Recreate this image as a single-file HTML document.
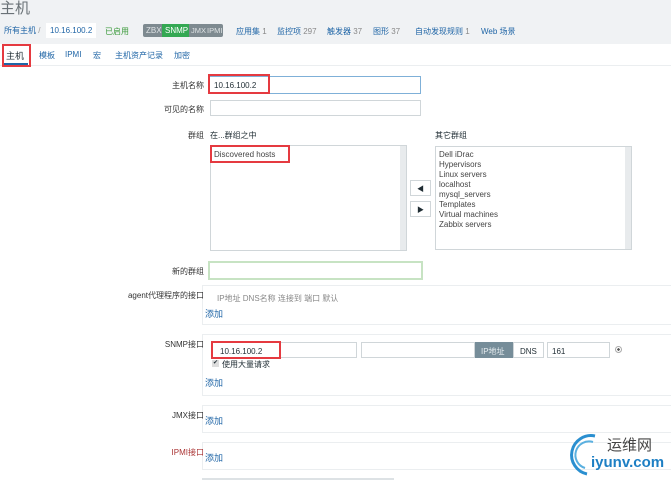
<!DOCTYPE html><html><head><meta charset="utf-8"><style>
*{margin:0;padding:0;box-sizing:border-box}
body{width:671px;height:480px;overflow:hidden;background:#fff;font-family:"Liberation Sans","Noto Sans CJK SC",sans-serif;font-size:8px;color:#1f2c33;position:relative}
.a{position:absolute;white-space:nowrap}
.b{color:#1f65a6}
.in{position:absolute;border:1px solid #d0d6d9;background:#fff}
.red{position:absolute;border:2px solid #e53a40}
.lbl{position:absolute;right:467px;white-space:nowrap;text-align:right;color:#333}
.box{position:absolute;left:202px;right:-5px;border:1px solid #ebeef0;border-right:none}
</style></head><body>
<div class="a" style="left:0;top:0;width:671px;height:44px;background:#f0f2f4"></div>
<div class="a" style="left:0;top:-3px;font-size:15px;color:#6a7277">主机</div>
<div class="a b" style="left:4px;top:25px">所有主机 <span style="color:#999">/</span></div>
<div class="in" style="left:46px;top:23px;width:50px;height:15px;border:none;padding:3px 0 0 4px;color:#1f65a6">10.16.100.2</div>
<div class="a" style="left:105px;top:26px;color:#3a9a3a">已启用</div>
<div class="a" style="left:143px;top:24px;width:80px;height:13px;background:#7e8a90;border-radius:2px"></div>
<div class="a" style="left:146px;top:26px;color:#dfe3e5">ZBX</div>
<div class="a" style="left:162px;top:24px;width:27px;height:13px;background:#34a853;color:#fff;padding:2px 0 0 3px">SNMP</div>
<div class="a" style="left:191px;top:26px;color:#dfe3e5;font-size:7.5px">JMX</div>
<div class="a" style="left:207px;top:26px;color:#dfe3e5;font-size:7.5px">IPMI</div>
<div class="a" style="left:236px;top:26px"><span class="b">应用集</span> <span style="color:#888">1</span></div>
<div class="a" style="left:277px;top:26px"><span class="b">监控项</span> <span style="color:#888">297</span></div>
<div class="a" style="left:327px;top:26px"><span class="b">触发器</span> <span style="color:#888">37</span></div>
<div class="a" style="left:373px;top:26px"><span class="b">图形</span> <span style="color:#888">37</span></div>
<div class="a" style="left:415px;top:26px"><span class="b">自动发现规则</span> <span style="color:#888">1</span></div>
<div class="a b" style="left:481px;top:26px">Web 场景</div>
<div class="a" style="left:0;top:65px;width:671px;height:1px;background:#ebeef0"></div>
<div class="a" style="left:6px;top:49px;font-size:9px">主机</div>
<div class="a" style="left:4px;top:63px;width:24px;height:2px;background:#1f65a6"></div>
<div class="red" style="left:2px;top:44px;width:29px;height:23px"></div>
<div class="a b" style="left:39px;top:50px">模板</div>
<div class="a b" style="left:65px;top:50px">IPMI</div>
<div class="a b" style="left:93px;top:50px">宏</div>
<div class="a b" style="left:115px;top:50px">主机资产记录</div>
<div class="a b" style="left:174px;top:50px">加密</div>

<div class="lbl" style="top:80px">主机名称</div>
<div class="in" style="left:208px;top:76px;width:213px;height:18px;border-color:#7fb0d8;padding:4px 0 0 5px">10.16.100.2</div>
<div class="red" style="left:208px;top:74px;width:62px;height:20px"></div>
<div class="lbl" style="top:104px">可见的名称</div>
<div class="in" style="left:210px;top:100px;width:211px;height:16px"></div>
<div class="lbl" style="top:130px">群组</div>
<div class="a" style="left:210px;top:130px">在...群组之中</div>
<div class="a" style="left:435px;top:130px">其它群组</div>
<div class="in" style="left:210px;top:145px;width:197px;height:106px"></div>
<div class="a" style="left:400px;top:146px;width:6px;height:104px;background:#e8ebed"></div>
<div class="a" style="left:214px;top:150px;color:#444">Discovered hosts</div>
<div class="red" style="left:210px;top:145px;width:80px;height:18px"></div>
<div class="in" style="left:410px;top:180px;width:21px;height:16px;text-align:center;font-size:7px;padding-top:3px">◀</div>
<div class="in" style="left:410px;top:201px;width:21px;height:16px;text-align:center;font-size:7px;padding-top:3px">▶</div>
<div class="in" style="left:435px;top:146px;width:197px;height:104px"></div>
<div class="a" style="left:625px;top:147px;width:6px;height:102px;background:#e8ebed"></div>
<div class="a" style="left:439px;top:150px;line-height:10px;color:#444">Dell iDrac<br>Hypervisors<br>Linux servers<br>localhost<br>mysql_servers<br>Templates<br>Virtual machines<br>Zabbix servers</div>

<div class="lbl" style="top:266px">新的群组</div>
<div class="in" style="left:208px;top:261px;width:215px;height:19px;border:2px solid #c7e3c3"></div>

<div class="box" style="top:285px;height:40px"></div>
<div class="lbl" style="top:290px">agent代理程序的接口</div>
<div class="a" style="left:217px;top:293px;color:#888">IP地址 DNS名称 连接到 端口 默认</div>
<div class="a b" style="left:205px;top:307px;font-size:9px">添加</div>

<div class="box" style="top:334px;height:62px"></div>
<div class="lbl" style="top:339px">SNMP接口</div>
<div class="in" style="left:211px;top:342px;width:146px;height:16px;padding:4px 0 0 8px">10.16.100.2</div>
<div class="red" style="left:211px;top:341px;width:70px;height:18px"></div>
<div class="in" style="left:361px;top:342px;width:114px;height:16px"></div>
<div class="a" style="left:475px;top:342px;width:38px;height:16px;background:#768d99;color:#e6ecef;padding:4px 0 0 6px">IP地址</div>
<div class="in" style="left:513px;top:342px;width:31px;height:16px;padding:4px 0 0 6px">DNS</div>
<div class="in" style="left:547px;top:342px;width:63px;height:16px;padding:4px 0 0 4px">161</div>
<div class="a" style="left:615px;top:346px;width:7px;height:7px;border-radius:50%;border:1px solid #aaa;background:radial-gradient(#555 35%,#fff 40%)"></div>
<div class="a" style="left:212px;top:360px;width:7px;height:7px;background:#ddd;font-size:6px;line-height:7px;text-align:center">✔</div>
<div class="a" style="left:222px;top:359px">使用大量请求</div>
<div class="a b" style="left:205px;top:376px;font-size:9px">添加</div>

<div class="box" style="top:405px;height:28px"></div>
<div class="lbl" style="top:410px">JMX接口</div>
<div class="a b" style="left:205px;top:414px;font-size:9px">添加</div>

<div class="box" style="top:442px;height:28px"></div>
<div class="lbl" style="top:447px;color:#a33">IPMI接口</div>
<div class="a b" style="left:205px;top:451px;font-size:9px">添加</div>
<div class="a" style="left:202px;top:478px;width:192px;height:2px;background:#dde2e5"></div>

<svg class="a" style="left:565px;top:432px" width="40" height="44" viewBox="0 0 40 44"><path d="M30 4 A18 18 0 1 0 22 42" fill="none" stroke="#2a8fd0" stroke-width="3"/><path d="M28 10 A12 12 0 1 0 20 36" fill="none" stroke="#5ab0e0" stroke-width="2"/></svg>
<div class="a" style="left:607px;top:434px;font-size:15px;color:#444">运维网</div>
<div class="a" style="left:591px;top:454px;font-size:15px;font-weight:bold;color:#1d7fc4">iyunv.com</div>
</body></html>
